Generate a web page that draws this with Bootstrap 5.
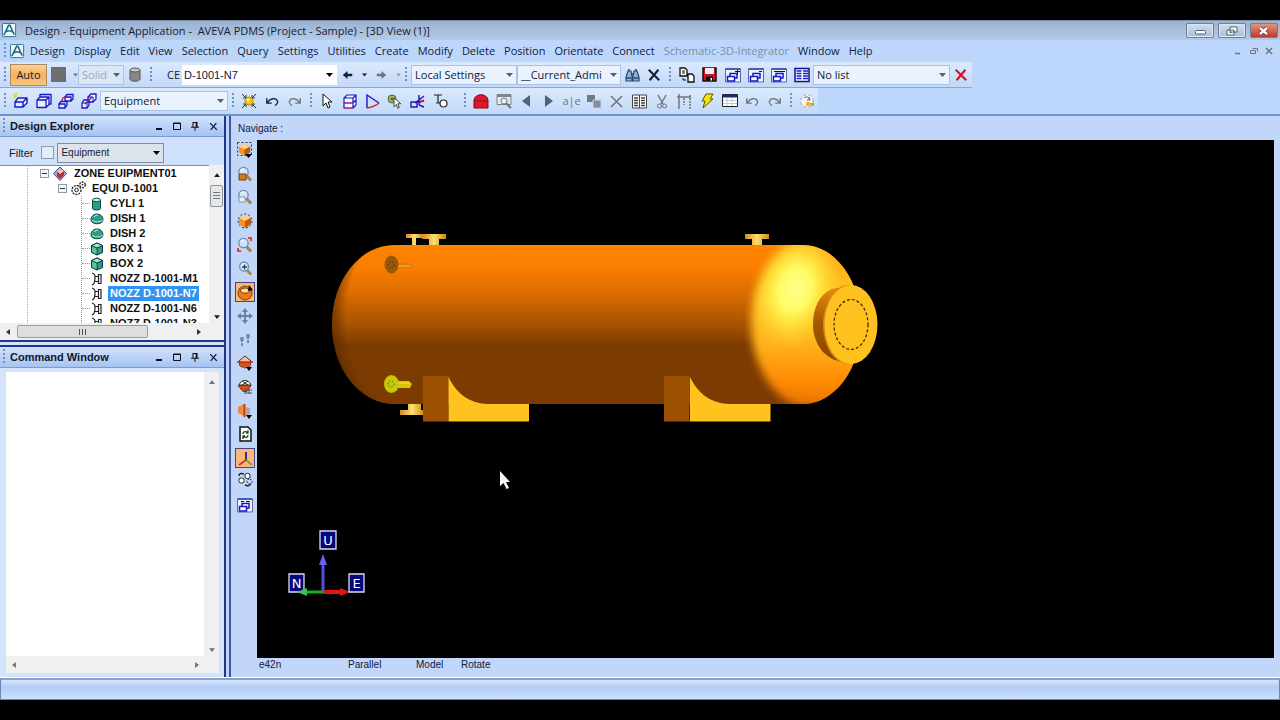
<!DOCTYPE html>
<html lang="en">
<head>
<meta charset="utf-8">
<meta name="viewport" content="width=device-width, initial-scale=1">
<title>Design - Equipment Application - AVEVA PDMS</title>
<link rel="stylesheet" href="https://cdn.jsdelivr.net/npm/bootstrap@5.3.0/dist/css/bootstrap.min.css">
<style>
:root{--line:#7fa6d8;--navy:#25358f}
body{background:#000;color:#12203a;font:11px/16px "Open Sans","Noto Sans",sans-serif;padding:20px 0;overflow:hidden}
button{border:0;background:none;padding:0;color:inherit;font:inherit}
svg{display:block;overflow:visible}
.app-frame{background:#bcd6fc}
.title-bar{height:20px;background:linear-gradient(#9ab2cf,#b4cbe8);border-top:1px solid #7d93ad;padding-left:2px;padding-right:2px}
.title-text{white-space:pre}
.win-btn{width:28px;height:15px;border:1px solid #6d8099;border-radius:2px;background:linear-gradient(#d0deee,#a9bfd8);box-shadow:inset 0 0 0 1px #dbe7f5}
.win-close{background:linear-gradient(#e29480,#c0392b);box-shadow:none}
.menu-row{height:22px;padding-left:4px;padding-right:4px}
.menu-row a{color:#12203a;text-decoration:none;white-space:nowrap}
.menu-row a.dim{color:#7d8fab}
.menu-list{gap:9px;margin-left:5px}
.grip{width:2px;height:16px;flex:none;background:repeating-linear-gradient(#6f8fc4 0 2px,transparent 2px 4px)}
.strip{height:26px;background:linear-gradient(#dbe9fd,#c3d9f8);border-bottom:1px solid #7fa9df;flex:none;padding-left:4px}
.tool{height:22px;display:flex;align-items:center;justify-content:center;flex:1 1 0;min-width:0}
.tool.lone{flex:0 0 22px}
.tool.slim{flex-grow:.6}
.tool-set{flex:none}
.w42{width:44px}.w66{width:68px}.w90{width:90px}.w134{width:136px}.w136{width:138px}.w316{width:316px}
.auto-btn{width:37px;height:22px;flex:none;border:1px solid #a98a5c;background:linear-gradient(#fbd09a,#f7b25c 50%,#fbc67c)}
.ce-label{padding:0 2px 0 15px}
.pick{appearance:none;flex:none;border:1px solid #a9c4e9;border-radius:0;height:20px;color:#12203a;font:inherit;padding:0 14px 0 3px;background:#eaf2fe url("data:image/svg+xml,%3Csvg xmlns='http://www.w3.org/2000/svg' width='8' height='5'%3E%3Cpath d='M0 0h8L4 5z' fill='%234a6484'/%3E%3C/svg%3E") no-repeat right 3px center/7px 4px}
.pick.solid{width:46px;color:#9aa7bb;background-color:#dce7f6}
.pick.ce{width:155px;padding-left:1px;border-color:#fff;background-color:#fff;font-family:"Liberation Sans",sans-serif;background-image:url("data:image/svg+xml,%3Csvg xmlns='http://www.w3.org/2000/svg' width='8' height='5'%3E%3Cpath d='M0 0h8L4 5z'/%3E%3C/svg%3E")}
.pick.local{width:106px}.pick.admi{width:104px}.pick.nolist{width:137px}.pick.equip{width:128px}
.arial{font-family:"Liberation Sans",sans-serif}
.workspace{border-top:2px solid #6f93c6}
.side{width:226px;flex:none;border-right:2px solid var(--navy);background:#d3e3fb}
.pane-head{height:21px;flex:none;padding-left:3px;padding-right:2px;background:linear-gradient(#d2e3fd,#a5c3f2);border-bottom:1px solid #7b9bd4}
.pane-head h2{font:bold 11px/16px "Liberation Sans",sans-serif;margin:0 0 0 5px;color:#101828}
.pane-head .tool{flex:none;width:18px}
.filter-row{height:28px;padding:3px 0 0 9px;background:#d0e1fb}
.filter-row label{margin-right:8px}
.filter-row input{appearance:none;width:13px;height:13px;border:1px solid #8e9cb0;background:#e6edf6;margin:0 3px 0 0}
.filter-row select{width:107px;border-color:#7f8ea4;background-color:#dde3ea;font:10px/16px "Liberation Sans",sans-serif;background-image:url("data:image/svg+xml,%3Csvg xmlns='http://www.w3.org/2000/svg' width='8' height='5'%3E%3Cpath d='M0 0h8L4 5z'/%3E%3C/svg%3E")}
.tree-view{height:158px;background:#fff;border-top:1px solid #7f8ea4;overflow:hidden;padding-left:27px;font:bold 11px/15px "Liberation Sans",sans-serif;color:#101010}
.tree-view ul{list-style:none;margin:0;padding:0}
.tree-root{border-left:1px dotted #aaa;padding-left:12px!important}
.tree-row{display:flex;align-items:center;height:15px;white-space:nowrap}
.tree-row span{padding:0 2px}
.lvl-1{padding-left:18px!important}
.lvl-2{margin-left:23px!important;border-left:1px dotted #999}
.lvl-2 .tree-row::before{content:"";width:8px;border-top:1px dotted #999}
.picked span{background:#3092f2;color:#fff}
.box-mark{width:9px;height:9px;border:1px solid #8f9bb0;background:linear-gradient(#333,#333) center/5px 1px no-repeat #f4f6f9}
.v-scroll{width:15px;background:#f0f0f0;flex:none}
.h-scroll{height:17px;background:#f0f0f0;flex:none}
.v-thumb{width:13px;height:22px;border:1px solid #8e959e;border-radius:2px;background:repeating-linear-gradient(#777 0 1px,transparent 1px 3px) center/7px 9px no-repeat #e6e6e6}
.h-thumb{width:131px;height:13px;border:1px solid #989da5;border-radius:2px;background:repeating-linear-gradient(90deg,#555 0 1px,transparent 1px 3px) center/7px 6px no-repeat #dedede}
.splitter{height:7px;flex:none;background:#d3e3fb;border-top:2px solid var(--navy);border-bottom:2px solid var(--navy)}
.cmd{margin:4px 5px 5px 6px;background:#f0f0f0}
.cmd textarea{border:0;resize:none;outline:0;background:#fff;min-height:0}
.view-pane{margin-left:3px;border-left:2px solid #44539a;background:#c1d6f8;min-width:0;font:10px/16px "Liberation Sans",sans-serif}
.nav-row{height:24px;padding-left:7px;flex:none;padding-top:2px}
.rail{width:26px;flex:none;margin-top:-2px}
.rail-main{height:332px}
.rail .tool{width:22px;margin-left:3px}
.rail > .tool{height:18px}
.rail .on{background:#fbb877;border:1px solid #4a4480;width:20px;flex:none;height:20px;margin:2px 0 2px 4px}
.canvas{background:#000;margin-right:6px;min-width:0;min-height:0;overflow:hidden}
.view-foot{height:20px;flex:none;padding-left:28px;line-height:14px}
.view-foot span:nth-child(1){width:89px}.view-foot span:nth-child(2){width:68px}.view-foot span:nth-child(3){width:45px}
.status-bar{height:22px;background:linear-gradient(#d4e4fb,#b4cdf4 40%,#cbe0fc);border:1px solid #6888b3;border-top:2px solid #8ba2c3;box-shadow:0 -1px #fff}
.dim-ico{opacity:.6}
</style>
</head>
<body class="vh-100 d-flex flex-column">
<svg width="0" height="0" class="position-absolute" aria-hidden="true">
<defs>
<symbol id="logo" viewBox="0 0 16 16"><rect x=".5" y=".5" width="14" height="14" rx="1" fill="#eef7fb" stroke="#2f6e8c"/><path d="M2 13 7 2.500h1.500L13 12.500M4 9.500C7 7.500 10 8 13 11" fill="none" stroke="#1f6a80" stroke-width="1.600"/></symbol>
<symbol id="cube" viewBox="0 0 16 16"><path d="M1 9h8v5H1zM1 9l3-4h9v5l-4 4M9 9l4-4" fill="#e6edff" stroke="#1818c8" stroke-width="1.400" stroke-linejoin="round"/></symbol>
<symbol id="win" viewBox="0 0 16 16"><path d="M.5 1.500h15v13.500H.5z" fill="#eef3ff" stroke="#5a6a9c"/><path d="M1 2h14" stroke="#4860b0" stroke-width="2"/><path d="M2.500 9.500h7v4.500h-7zM5 9V6.500h7V11H9.500" fill="#fff" stroke="#1515d0" stroke-width="1.500"/></symbol>
<symbol id="cursor" viewBox="0 0 16 16"><path d="M4 1v12l3-3 2 5 2-1-2-5h4z" fill="#fff" stroke="#111"/></symbol>
<symbol id="ex" viewBox="0 0 16 16"><path d="M2 2 14 14M13 2 3 14" fill="none" stroke="currentColor" stroke-width="2.400"/></symbol>
<symbol id="tri" viewBox="0 0 8 5"><path d="M0 0h8L4 5z" fill="currentColor"/></symbol>
<symbol id="arr" viewBox="0 0 14 12"><path d="M1 6 7 1v3.500h6v3H7V11z" fill="currentColor"/></symbol>
<symbol id="undo" viewBox="0 0 16 16"><path d="M1 4v6h6M2 9c3-5 10-6 12-2 1 3-1 5-3 6" fill="none" stroke="currentColor" stroke-width="1.700"/></symbol>
<symbol id="pin" viewBox="0 0 10 12"><path d="M2.500 7V1.500h5V7M0 7.500h10M5 7v5M6.500 2v5" fill="none" stroke="#111" stroke-width="1.300"/></symbol>
<symbol id="minb" viewBox="0 0 8 8"><path d="M1 7h6" stroke="#111" stroke-width="2"/></symbol>
<symbol id="maxb" viewBox="0 0 8 8"><path d="M.5 1h7v6.500h-7zM0 1.500h8" fill="none" stroke="#111"/></symbol>
<symbol id="orcube" viewBox="0 0 16 16"><path d="M8 2l6 3v6l-6 4-6-4V5z" fill="#f09226"/><path d="M8 2l6 3-6 3-6-3z" fill="#ffd089"/><path d="M8 8l6-3v6l-6 4z" fill="#b85d0c"/></symbol>
<symbol id="lens" viewBox="0 0 16 16"><path d="m9 9 5 5.500" stroke="#a88646" stroke-width="3"/><circle cx="6.500" cy="6" r="4.700" fill="#cfe6fa" stroke="#6a8cae" stroke-width="1.300"/><path d="M4 5a3 3 0 0 1 3-2" stroke="#fff" fill="none"/></symbol>
<symbol id="dish" viewBox="0 0 14 14"><path d="M1 8c0-8 12-8 12 0 0 5-12 5-12 0z" fill="#2f9c87" stroke="#0d4a42"/><path d="M2 8c2 2.500 8 2.500 11 0" stroke="#b4efdf" fill="none"/><path d="M4 5c1-1.500 3-2 4-2" stroke="#c9f6ea" fill="none"/></symbol>
<symbol id="tbox" viewBox="0 0 14 14"><path d="m7 1 5.500 2.500v7L7 13l-5.500-2.500v-7z" fill="#2f9c87" stroke="#0d3a36"/><path d="m1.500 3.500 5.500 2.500 5.500-2.500L7 1z" fill="#a9e6d8" stroke="#0d3a36"/><path d="M7 6v7" stroke="#0d3a36"/><path d="m2 4.500 4.500 2v5.500L2 10z" fill="#5cc0ab"/></symbol>
<symbol id="nozz" viewBox="0 0 14 14"><path d="M2 1c3 1 3 2 3 5s0 6-3 7M5 4.500h4M5 9.500h4M8.500 2.500h2.500v9H8.500z" fill="none" stroke="#222" stroke-width="1.200"/></symbol>
</defs>
</svg>

<div class="app-frame d-flex flex-column flex-fill">
<header class="title-bar d-flex align-items-center flex-shrink-0">
<svg width="15" height="15"><use href="#logo"/></svg>
<span class="title-text ms-2 me-auto">Design - Equipment Application -  AVEVA PDMS (Project - Sample) - [3D View (1)]</span>
<div class="d-flex gap-1">
<button class="win-btn d-flex align-items-center justify-content-center" aria-label="Minimize"><svg width="11" height="9"><rect x=".5" y="4.500" width="10" height="3.500" rx="1" fill="#fff" stroke="#53616f"/></svg></button>
<button class="win-btn d-flex align-items-center justify-content-center" aria-label="Restore"><svg width="12" height="10"><path d="M4 1h7v5H4zM1 4h7v5H1z" fill="#fff" stroke="#53616f"/><path d="M3.500 6h2v1h-2z" fill="#53616f"/></svg></button>
<button class="win-btn win-close d-flex align-items-center justify-content-center" aria-label="Close"><svg width="8" height="6"><path d="m0 0 7 6M7 0 0 6" stroke="#563030" stroke-width="4"/><path d="m0 0 7 6M7 0 0 6" stroke="#fff" stroke-width="2.400"/></svg></button>
</div>
</header>

<nav class="menu-row d-flex align-items-center flex-shrink-0">
<i class="grip"></i><svg class="ms-1" width="15" height="15"><use href="#logo"/></svg>
<div class="menu-list d-flex me-auto">
<a href="#">Design</a><a href="#">Display</a><a href="#">Edit</a><a href="#">View</a><a href="#">Selection</a><a href="#">Query</a><a href="#">Settings</a><a href="#">Utilities</a><a href="#">Create</a><a href="#">Modify</a><a href="#">Delete</a><a href="#">Position</a><a href="#">Orientate</a><a href="#">Connect</a><a href="#" class="dim">Schematic-3D-Integrator</a><a href="#">Window</a><a href="#">Help</a>
</div>
<div class="d-flex gap-2 text-secondary me-1">
<button aria-label="Minimize view"><svg width="8" height="8"><path d="M1 6.500h5" stroke="currentColor" stroke-width="1.500"/></svg></button>
<button aria-label="Restore view"><svg width="8" height="8"><path d="M2.500 1.500h5v3M.5 3.500h5v3h-5z" fill="none" stroke="currentColor"/></svg></button>
<button aria-label="Close view"><svg width="6" height="8"><path d="m0 1 6 6M6 1 0 7" stroke="currentColor" stroke-width="1.500"/></svg></button>
</div>
</nav>

<div class="d-flex flex-shrink-0">
<div class="strip d-flex align-items-center" role="toolbar" aria-label="Representation">
<i class="grip me-1"></i>
<button class="auto-btn">Auto</button>
<button class="tool lone" aria-label="Colour"><svg width="15" height="15"><path d="M0 0h15v15H0z" fill="#6f6f6f"/></svg></button>
<svg class="ms-1 flex-shrink-0 text-secondary" width="5" height="4"><use href="#tri"/></svg>
<select class="pick solid" aria-label="Fill style"><option>Solid</option></select>
<button class="tool lone" aria-label="Cylinder"><svg width="12" height="15"><path d="M1 3v9c0 3 10 3 10 0V3" fill="#888" stroke="#555"/><ellipse cx="6" cy="3" rx="5" ry="2" fill="#c8c8c8" stroke="#555"/></svg></button>
<i class="grip ms-1"></i>
<label class="ce-label text-nowrap" for="ce">CE</label>
<select id="ce" class="pick ce"><option>D-1001-N7</option></select>
<div class="tool-set d-flex w66">
<button class="tool" aria-label="Back"><svg width="11" height="10"><use href="#arr"/></svg></button>
<button class="tool slim" aria-label="Back list"><svg width="5" height="4"><use href="#tri"/></svg></button>
<button class="tool text-secondary" aria-label="Forward"><svg width="11" height="10" style="transform:rotate(180deg)"><use href="#arr"/></svg></button>
<button class="tool slim text-secondary" aria-label="Forward list"><svg class="dim-ico" width="5" height="4"><use href="#tri"/></svg></button>
</div>
<i class="grip me-1"></i>
<select class="pick local" aria-label="Settings scope"><option>Local Settings</option></select>
<select class="pick admi" aria-label="List"><option>__Current_Admi</option></select>
<div class="tool-set d-flex w42 me-1">
<button class="tool" aria-label="Find"><svg width="15" height="14"><path d="M1 9l2-6h3l1 6v4H1zM14 9l-2-6H9L8 9v4h6z" fill="#8fb2d8" stroke="#27486f" stroke-width="1.200"/><path d="M6.500 6h2M1 10h5M9 10h5M4 3V1M11 3V1" stroke="#27486f" stroke-width="1.500"/></svg></button>
<button class="tool" aria-label="Clear"><svg width="14" height="14"><use href="#ex"/></svg></button>
</div>
<i class="grip"></i>
<div class="tool-set d-flex w136 ms-1">
<button class="tool" aria-label="Copy"><svg width="16" height="16"><path d="M1 1h5l2 2v6H1zM9 7h4l2 2v6H9z" fill="#fff" stroke="#111" stroke-width="1.300"/><path d="M3 4h3M3 6h3M4 11v2h3" stroke="#111" fill="none"/></svg></button>
<button class="tool" aria-label="Save"><svg width="15" height="15"><path d="M1 1h13v13H1z" fill="#d31024" stroke="#2b060a" stroke-width="1.500"/><path d="M3 1h9v6H3z" fill="#e9edf3"/><path d="M4 9.500h7V14H4z" fill="#111"/><path d="M8.500 11h1.500v2.500H8.500z" fill="#fff"/></svg></button>
<button class="tool" aria-label="Add view"><svg width="16" height="16"><use href="#win"/><path d="M10 4.500h5M12.500 2.500v5" stroke="#112" /></svg></button>
<button class="tool" aria-label="Open view"><svg width="16" height="16"><use href="#win"/><path d="M11 4.500h3" stroke="#112"/></svg></button>
<button class="tool" aria-label="Remove view"><svg width="16" height="16"><use href="#win"/><path d="M3 4.500h11" stroke="#112"/></svg></button>
<button class="tool" aria-label="Columns"><svg width="16" height="16"><path d="M1 1.500h14v13H1z" fill="#fff" stroke="#10108a" stroke-width="1.500"/><path d="M2.500 4h5M2.500 6.500h5M2.500 9h5M2.500 11.500h5M9 4h5M9 6.500h5M9 9h5M9 11.500h5" stroke="#1818e0" stroke-width="1.600"/></svg></button>
</div>
<select class="pick nolist" aria-label="Named list"><option>No list</option></select>
<button class="tool lone" aria-label="Delete list"><svg width="14" height="14" style="color:#d8121c"><use href="#ex"/></svg></button>
</div>
</div>

<div class="d-flex flex-shrink-0">
<div class="strip d-flex align-items-center border-bottom-0" role="toolbar" aria-label="Equipment tools">
<i class="grip me-1"></i>
<div class="tool-set d-flex w90">
<button class="tool" aria-label="Create equipment"><svg width="16" height="16"><use href="#cube" x="1" width="16" height="16"/><path d="M0 1l4 4M4 0 1 5" stroke="#e8d800" stroke-width="1.500"/></svg></button>
<button class="tool" aria-label="Create structure"><svg width="16" height="16"><path d="M4 4V1.500h11V11h-2.500M1 7h9v7.500H1zM1 7l3-3h9v7.500l-3 3M10 7l3-3" fill="#e6edff" stroke="#1818c8" stroke-width="1.300" stroke-linejoin="round"/></svg></button>
<button class="tool" aria-label="Copy element"><svg width="16" height="16"><path d="M7 4h6v4H7zM7 4l2-2.500h6V6l-2 2M1 11h6v4H1zM1 11l2-2.500h6V12l-2 3" fill="#e6edff" stroke="#1818c8" stroke-width="1.300"/><path d="M4 8c0-3 1-4 5-4" stroke="#a01a5a" fill="none" stroke-width="1.300"/></svg></button>
<button class="tool" aria-label="Connect element"><svg width="16" height="16"><path d="M7 4 10 1h5v5l-3 3H7zM1 10l2-3h5v5l-2 3H1z" fill="#e6edff" stroke="#1818c8" stroke-width="1.300"/><path d="M1 10h5v5M6 10l2-3M7 4h5v5" stroke="#1818c8" fill="none"/><path d="m4 11 7-7" stroke="#a01a5a" stroke-width="1.300"/></svg></button>
</div>
<select class="pick equip" aria-label="Element type"><option>Equipment</option></select>
<i class="grip mx-1"></i>
<div class="tool-set d-flex w66">
<button class="tool" aria-label="Explode"><svg width="16" height="16"><path d="m1 1 4 4m10-4-4 4M1 15l4-4m10 4-4-4M5 2v3H2M11 2v3h3M5 14v-3H2M11 14v-3h3" stroke="#333" fill="none"/><circle cx="8" cy="8" r="4" fill="#f4c713" stroke="#c28e00"/><circle cx="7" cy="7" r="1.300" fill="#fff7b0"/></svg></button>
<button class="tool" aria-label="Undo"><svg width="13" height="13"><use href="#undo"/></svg></button>
<button class="tool text-secondary" aria-label="Redo"><svg width="13" height="13" style="transform:scaleX(-1)"><use href="#undo"/></svg></button>
</div>
<i class="grip ms-1"></i>
<div class="tool-set d-flex w134 ms-1 me-2">
<button class="tool" aria-label="Select"><svg width="16" height="16"><use href="#cursor"/></svg></button>
<button class="tool" aria-label="Box"><svg width="14" height="15"><path d="M1 4h9v10H1zM1 4l3-3h9v10l-3 3M10 4l3-3M1 9h9l3-3" fill="#f4f7ff" stroke="#1818c8" stroke-width="1.200"/><path d="M1 14h9M1 9h9" stroke="#d02060"/></svg></button>
<button class="tool" aria-label="Cone"><svg width="15" height="15"><path d="M2 14V1l12 8" fill="none" stroke="#1818c8" stroke-width="1.400"/><path d="M2 14c5-1 9-2 12-5" fill="none" stroke="#d0202c" stroke-width="1.300"/></svg></button>
<button class="tool" aria-label="Pick element"><svg width="16" height="16"><circle cx="5" cy="6" r="4" fill="#8ac46c" stroke="#2f7c30"/><circle cx="5" cy="6" r="1.500" fill="#e02c20"/><use href="#cursor" x="4" y="4" width="12" height="12"/></svg></button>
<button class="tool" aria-label="Move"><svg width="16" height="16"><path d="M1 9h6v5H1zM7 9l7-1M9 12V2M5 10l9-7M9 12l5 2" fill="none" stroke="#1818b8" stroke-width="1.400"/><path d="M9 10l5-3" stroke="#d01c30" stroke-width="1.500"/></svg></button>
<button class="tool" aria-label="Modify"><svg width="16" height="16"><path d="M1 2h8M5 2v8M3 10h4" stroke="#222" fill="none" stroke-width="1.200"/><circle cx="10.500" cy="10.500" r="3.500" fill="#fff" stroke="#222" stroke-width="1.200"/></svg></button>
</div>
</div>
<div class="strip d-flex align-items-center border-bottom-0" role="toolbar" aria-label="Model editor">
<i class="grip"></i>
<div class="tool-set d-flex w316 ms-1">
<button class="tool" aria-label="Model editor"><svg width="16" height="16"><path d="M1 15V7c1-7 13-7 14 0v8z" fill="#e0182a" stroke="#7c0a14"/><path d="M1 8h14" stroke="#8c0f1c"/></svg></button>
<button class="tool dim-ico" aria-label="Find in view"><svg width="16" height="16"><path d="M1 1.500h14v10H1z" fill="#eee" stroke="#444"/><path d="M1 3h14" stroke="#444" stroke-width="2"/><circle cx="8" cy="8" r="3" fill="#fff" stroke="#333"/><path d="m10 10 5 5" stroke="#333" stroke-width="2"/></svg></button>
<button class="tool" aria-label="Previous"><svg width="10" height="14"><path d="M9 1v12L1 7z" fill="#566172"/></svg></button>
<button class="tool" aria-label="Next"><svg width="10" height="14"><path d="M1 1v12l8-6z" fill="#566172"/></svg></button>
<button class="tool text-secondary" aria-label="Rename">a|e</button>
<button class="tool dim-ico" aria-label="Group"><svg width="14" height="13"><path d="M0 0h8v7H0z" fill="#333"/><path d="M6 5h8v8H6z" fill="#555" stroke="#ccd"/></svg></button>
<button class="tool text-secondary" aria-label="Delete"><svg width="13" height="13"><path d="m1 1 11 11M12 1 1 12" stroke="currentColor" stroke-width="1.500"/></svg></button>
<button class="tool" aria-label="Properties"><svg width="15" height="15"><path d="M.5 1h14v13H.5zM7.500 1v13" fill="#fff" stroke="#444"/><path d="M2 4h4M2 6.500h4M2 9h4M2 11.500h4M9 4h4M9 6.500h4M9 9h4M9 11.500h4" stroke="#444" stroke-width="1.300"/></svg></button>
<button class="tool text-secondary" aria-label="Cut"><svg width="12" height="15"><path d="m2 1 5 9M10 1 5 10" stroke="currentColor" stroke-width="1.400"/><circle cx="3.500" cy="12" r="2" fill="none" stroke="currentColor"/><circle cx="8.500" cy="12" r="2" fill="none" stroke="currentColor"/></svg></button>
<button class="tool text-secondary" aria-label="Measure"><svg width="15" height="15"><path d="M2 0v15M0 3h14" stroke="currentColor" stroke-width="1.500"/><path d="M13 1v14M7 4v7" stroke="currentColor" stroke-width="1.500" stroke-dasharray="2 1"/></svg></button>
<button class="tool" aria-label="Quick run"><svg width="13" height="16"><path d="M5 1h7L9 6h3L2 15l2-7H1z" fill="#f7e600" stroke="#5a5200"/></svg></button>
<button class="tool" aria-label="Form"><svg width="16" height="14"><path d="M.5.5h15v12H.5z" fill="#fff" stroke="#222"/><path d="M1 2h14" stroke="#1b2f6b" stroke-width="3"/><path d="M1 6.500h14M1 9.500h14M5 4v8M10 4v8" stroke="#c3c9d6"/></svg></button>
<button class="tool text-secondary" aria-label="Undo edit"><svg width="13" height="13"><use href="#undo"/></svg></button>
<button class="tool text-secondary" aria-label="Redo edit"><svg width="13" height="13" style="transform:scaleX(-1)"><use href="#undo"/></svg></button>
</div>
<i class="grip mx-1"></i>
<button class="tool lone" aria-label="Render options"><svg width="15" height="15"><circle cx="7" cy="7" r="6.200" fill="#f6f7fa" stroke="#9aa" stroke-dasharray="3 2"/><path d="M4 4c2-2 5-1 5 1M9 3l1 3H7" stroke="#556" fill="none"/><circle cx="8" cy="10" r="2.200" fill="#f2b514"/><path d="M10 9h4v3h-3z" fill="#e5a000"/></svg></button>
</div>
</div>

<main class="workspace d-flex flex-fill">
<aside class="side d-flex flex-column">
<section class="d-flex flex-column flex-shrink-0">
<div class="pane-head d-flex align-items-center"><i class="grip"></i><h2 class="me-auto">Design Explorer</h2>
<button class="tool" aria-label="Minimize"><svg width="8" height="8"><use href="#minb"/></svg></button><button class="tool" aria-label="Maximize"><svg width="8" height="8"><use href="#maxb"/></svg></button><button class="tool" aria-label="Pin"><svg width="8" height="10"><use href="#pin"/></svg></button><button class="tool" aria-label="Close"><svg width="9" height="9"><use href="#ex"/></svg></button></div>
<div class="filter-row d-flex align-items-center"><label class="arial" for="filter">Filter</label><input id="filter" type="checkbox"><select class="pick" aria-label="Filter type"><option>Equipment</option></select></div>
<div class="d-flex">
<div class="tree-view flex-fill">
<ul class="tree-root"><li>
<div class="tree-row"><i class="box-mark"></i><svg class="mx-1" width="15" height="14"><path d="m7 0 6.500 6.500L7 13.500.5 6.500z" fill="#9bb4d6" stroke="#3b5376"/><path d="M4 4l3 3v5L4 9zM7 7l4-3v4L7 12z" fill="#c8202c"/><path d="m4 4 3-2 4 2-4 3z" fill="#f0c4c4"/></svg><span>ZONE EUIPMENT01</span></div>
<ul class="lvl-1"><li>
<div class="tree-row"><i class="box-mark"></i><svg class="mx-1" width="15" height="15"><circle cx="5.500" cy="9" r="4.500" fill="#fff" stroke="#222" stroke-width="1.300" stroke-dasharray="2 1"/><circle cx="5.500" cy="9" r="1.800" fill="none" stroke="#222"/><circle cx="11.500" cy="3.800" r="2.800" fill="#fff" stroke="#222" stroke-width="1.300" stroke-dasharray="2 1"/><circle cx="11.500" cy="3.800" r=".8"/></svg><span>EQUI D-1001</span></div>
<ul class="lvl-2">
<li class="tree-row"><svg class="me-1" width="14" height="14"><path d="M2.500 3v8.500c0 2 8 2 8 0V3" fill="#2f9c87" stroke="#0d4a42"/><ellipse cx="6.500" cy="3" rx="4" ry="1.800" fill="#bff0e4" stroke="#0d4a42"/></svg><span>CYLI 1</span></li>
<li class="tree-row"><svg class="me-1" width="14" height="14"><use href="#dish"/></svg><span>DISH 1</span></li>
<li class="tree-row"><svg class="me-1" width="14" height="14"><use href="#dish"/></svg><span>DISH 2</span></li>
<li class="tree-row"><svg class="me-1" width="14" height="14"><use href="#tbox"/></svg><span>BOX 1</span></li>
<li class="tree-row"><svg class="me-1" width="14" height="14"><use href="#tbox"/></svg><span>BOX 2</span></li>
<li class="tree-row"><svg class="me-1" width="14" height="14"><use href="#nozz"/></svg><span>NOZZ D-1001-M1</span></li>
<li class="tree-row picked"><svg class="me-1" width="14" height="14"><use href="#nozz"/></svg><span>NOZZ D-1001-N7</span></li>
<li class="tree-row"><svg class="me-1" width="14" height="14"><use href="#nozz"/></svg><span>NOZZ D-1001-N6</span></li>
<li class="tree-row"><svg class="me-1" width="14" height="14"><use href="#nozz"/></svg><span>NOZZ D-1001-N3</span></li>
</ul></li></ul></li></ul>
</div>
<div class="v-scroll d-flex flex-column align-items-center pt-2 pb-1"><svg width="6" height="4" style="transform:scaleY(-1)"><use href="#tri"/></svg><i class="v-thumb mt-2 mb-auto"></i><svg width="6" height="4"><use href="#tri"/></svg></div>
</div>
<div class="h-scroll d-flex align-items-center ps-1"><svg width="9" height="6"><path d="M6 0v6L2 3z" fill="#333"/></svg><i class="h-thumb ms-1 me-5"></i><svg width="6" height="6"><path d="M1 0v6l4-3z" fill="#333"/></svg></div>
</section>
<div class="splitter"></div>
<section class="d-flex flex-column flex-fill">
<div class="pane-head d-flex align-items-center"><i class="grip"></i><h2 class="me-auto">Command Window</h2>
<button class="tool" aria-label="Minimize"><svg width="8" height="8"><use href="#minb"/></svg></button><button class="tool" aria-label="Maximize"><svg width="8" height="8"><use href="#maxb"/></svg></button><button class="tool" aria-label="Pin"><svg width="8" height="10"><use href="#pin"/></svg></button><button class="tool" aria-label="Close"><svg width="9" height="9"><use href="#ex"/></svg></button></div>
<div class="cmd d-flex flex-column flex-fill">
<div class="d-flex flex-fill"><textarea class="flex-fill w-100" aria-label="Command input"></textarea><div class="v-scroll d-flex flex-column justify-content-between align-items-center pt-2 pb-1 text-secondary"><svg width="6" height="4" style="transform:scaleY(-1)"><use href="#tri"/></svg><svg width="6" height="4"><use href="#tri"/></svg></div></div>
<div class="h-scroll d-flex align-items-center justify-content-between ps-1 pe-3"><svg width="7" height="6"><path d="M6 0v6L2 3z" fill="#777"/></svg><svg width="9" height="6"><path d="M1 0v6l4-3z" fill="#777"/></svg></div>
</div>
</section>
</aside>

<section class="view-pane d-flex flex-column flex-fill">
<div class="nav-row d-flex align-items-center">Navigate :</div>
<div class="d-flex flex-fill">
<div class="rail">
<div class="rail-main d-flex flex-column">
<button class="tool" aria-label="Limits"><svg width="16" height="16"><path d="M.5.5h14v13H.5z" fill="none" stroke="#333" stroke-dasharray="2 2"/><use href="#orcube" width="15" height="15"/><path d="M8 12h7l-3.500 4z"/></svg></button>
<button class="tool" aria-label="Zoom to selection"><svg width="16" height="16"><use href="#lens" width="16" height="16"/><path d="M2 8h7v6H2z" fill="#d47a1c" stroke="#7c430a"/></svg></button>
<button class="tool" aria-label="Zoom window"><svg width="16" height="16"><use href="#lens"/><path d="M2 8h6v5H2z" fill="#edf3fb" stroke="#8295ae"/></svg></button>
<button class="tool" aria-label="Fit"><svg width="16" height="16"><circle cx="8" cy="8" r="7" fill="none" stroke="#333" stroke-dasharray="2 2"/><use href="#orcube"/></svg></button>
<button class="tool" aria-label="Zoom area"><svg width="16" height="16"><use href="#lens"/><path d="M11 1h3v3M1 11v3h3" fill="none" stroke="#d24a3a" stroke-width="2"/></svg></button>
<button class="tool" aria-label="Zoom in"><svg width="15" height="15"><use href="#lens"/><path d="M4 6h5M6.500 3.500v5" stroke="#345" stroke-width="1.300"/></svg></button>
<button class="tool on" aria-label="Rotate"><svg width="17" height="17"><circle cx="8" cy="9" r="7" fill="#e87d1a" stroke="#7d3d0a"/><path d="M3 7c2-4 8-4 10 0-3 3-7 3-10 0z" fill="#ffd9a1" stroke="#703808"/><path d="m12 1 4 5-5 1z"/></svg></button>
<button class="tool" aria-label="Pan"><svg width="16" height="16"><path d="M8 2v12M2 8h12" stroke="#66809e" stroke-width="1.800"/><path d="M8 0l3 4H5zM8 16l3-4H5zM0 8l4-3v6zM16 8l-4-3v6z" fill="#66809e"/></svg></button>
<button class="tool" aria-label="Walk"><svg width="12" height="14"><path d="M1 6c0-3 4-3 4 0l-1 3H2zM2 10h2v3H2zM7 3c0-3 4-3 4 0l-1 3H8zM8 7h2v3H8z" fill="#6f8cab"/></svg></button>
<button class="tool" aria-label="Clip"><svg width="16" height="16"><path d="m8 1 6 5-1 5-5 2-5-2-1-5z" fill="#f0c498" stroke="#593018"/><path d="M2 7h12l-2 4-4 2-4-2z" fill="#d2551a"/><path d="M0 7h16" stroke="#c8242c" stroke-width="1.500"/><path d="M9 12h6l-3 4z"/></svg></button>
<button class="tool" aria-label="Clip to element"><svg width="16" height="16"><path d="M2 6c2-6 10-6 12 0zM5 2l6 4M11 2 5 6" fill="#fff" stroke="#333"/><path d="M1 6.500h13l-4 6H6z" fill="#d2551a" stroke="#743010"/><path d="M8 11h7M8 14h7M8 10v5M12 11v4" stroke="#556" /></svg></button>
<button class="tool" aria-label="Section"><svg width="16" height="16"><path d="m1 4 6-3v12l-6-3z" fill="#f28a3c"/><path d="m9 4 4 1v6l-4 1z" fill="#b9a69a"/><path d="M7.500 1v13" stroke="#c53b16" stroke-width="2"/><path d="M9 12h6l-3 4z"/></svg></button>
<button class="tool" aria-label="Refresh"><svg width="13" height="16"><path d="M1 1h8l3 3v11H1z" fill="#fff" stroke="#111" stroke-width="1.500"/><path d="M4 8c0-3 4-3 5-1M9 9c0 3-4 3-5 1M9 4v3H7M4 13v-3h2" fill="none" stroke="#184a28" stroke-width="1.300"/></svg></button>
<button class="tool on" aria-label="Axes"><svg width="17" height="17"><path d="M9 10V2" stroke="#3a2ba0" stroke-width="2"/><path d="m9 10-7 5" stroke="#d22" stroke-width="1.600"/><path d="m9 10 6 5" stroke="#3a3" stroke-width="1.600"/></svg></button>
</div>
<button class="tool" aria-label="Swap views"><svg width="15" height="15"><path d="M1 4c0-3 3-3 5-2M13 12l-3 2-3-1" fill="none" stroke="#222" stroke-width="1.500"/><circle cx="9.500" cy="4" r="2.700" fill="#fff" stroke="#222"/><circle cx="3.500" cy="8.500" r="2.700" fill="#fff" stroke="#222"/><circle cx="11.500" cy="9.500" r="2.500" fill="none" stroke="#234" stroke-dasharray="2 1"/></svg></button>
<button class="tool mt-2" aria-label="View window"><svg width="16" height="16"><use href="#win"/><path d="M4 4.500h3M9 4.500h4" stroke="#112"/></svg></button>
</div>
<div class="canvas flex-fill">
<svg width="1017" height="518" viewBox="257 140 1017 518" role="img" aria-label="Horizontal vessel D-1001">
<defs>
<linearGradient id="shell" x1="0" y1="245" x2="0" y2="404" gradientUnits="userSpaceOnUse"><stop offset="0" stop-color="#ff8400"/><stop offset=".15" stop-color="#f97d00"/><stop offset=".3" stop-color="#dc6d00"/><stop offset=".5" stop-color="#a75200"/><stop offset=".63" stop-color="#7c3c00"/><stop offset="1" stop-color="#7c3b00"/></linearGradient>
<linearGradient id="head" x1="0" y1="245" x2="0" y2="404" gradientUnits="userSpaceOnUse"><stop offset="0" stop-color="#ffa814"/><stop offset=".3" stop-color="#ffc322"/><stop offset=".6" stop-color="#ffb51c"/><stop offset=".85" stop-color="#ff8c05"/><stop offset="1" stop-color="#e87600"/></linearGradient>
<radialGradient id="glow" cx="0" cy="0" r="1" gradientUnits="userSpaceOnUse" gradientTransform="translate(795 289) rotate(15) scale(45 62)"><stop offset="0" stop-color="#ffff8c"/><stop offset=".35" stop-color="#fffb66"/><stop offset=".6" stop-color="#ffee46" stop-opacity=".7"/><stop offset="1" stop-color="#ffd030" stop-opacity="0"/></radialGradient>
<linearGradient id="flange"><stop offset="0" stop-color="#d38a20"/><stop offset=".5" stop-color="#ffe070"/><stop offset="1" stop-color="#c98a10"/></linearGradient>
<linearGradient id="neck" x1="0" y1="0" x2="0" y2="1"><stop offset="0" stop-color="#e58a10"/><stop offset=".5" stop-color="#a35600"/><stop offset="1" stop-color="#8a4300"/></linearGradient>
<radialGradient id="rim" cx="0" cy="0" r="1" gradientUnits="userSpaceOnUse" gradientTransform="translate(410 318) scale(78 112)"><stop offset=".82" stop-color="#5a2a00" stop-opacity="0"/><stop offset="1" stop-color="#5a2a00" stop-opacity=".7"/></radialGradient>
<filter id="soft" x="-20%" y="-20%" width="140%" height="140%"><feGaussianBlur stdDeviation="4"/></filter>
<clipPath id="outline"><path d="M394 245H803A58 79.500 0 0 1 803 404H394A62 79.500 0 0 1 394 245z"/></clipPath>
<mask id="headmask" maskUnits="userSpaceOnUse" x="730" y="230" width="160" height="190"><ellipse cx="811" cy="322" rx="60" ry="86" fill="#fff" filter="url(#soft)"/><path d="M815 240h60v170h-60z" fill="#fff"/></mask>
</defs>
<g fill="url(#flange)"><path d="M406 234h17v4h-17zM412 238h4v8h-4z"/><path d="M422 234h24v5h-24zM429 239h10v7h-10z"/><path d="M745 234h24v5h-24zM752 239h10v7h-10z"/><path d="M408 402h13v9h-13zM400 410h24v5h-24z"/></g>
<g clip-path="url(#outline)"><path d="M330 240h550v170H330z" fill="url(#shell)"/><path d="M330 243h64v163h-64z" fill="url(#rim)"/><g mask="url(#headmask)"><path d="M735 240h140v170H735z" fill="url(#head)"/><path d="M735 240h140v170H735z" fill="url(#glow)"/></g></g>
<path d="M842 288c-16-2-29 14-29 36 0 20 12 36 30 38z" fill="url(#neck)"/>
<ellipse cx="848" cy="324.500" rx="25" ry="39.500" fill="#d98a0c"/><ellipse cx="851" cy="324.500" rx="26.500" ry="39.500" fill="#ffc11d"/>
<ellipse cx="851" cy="324.500" rx="17" ry="25" fill="none" stroke="#3a2600" stroke-width="1.200" stroke-dasharray="3 2"/>
<path d="M423 376h25.500v45.500H423zM664 376h25.500v45.500H664z" fill="#9d5000"/>
<path id="saddle" d="M448.500 377C456 392 467 403 488 404H529v17.500h-80.500z" fill="#ffc21e"/><use href="#saddle" x="241.500"/>
<path d="M398 263h12l2 2-2 3h-12z" fill="#e07b10"/><path d="M398 266h12" stroke="#ffb84c"/><ellipse cx="391.500" cy="264.500" rx="7" ry="9" fill="#9b5708"/><circle cx="391" cy="265" r="3" fill="none" stroke="#2c1800" stroke-dasharray="1 2"/>
<path d="M397 381h12l3 3-2 4h-13z" fill="#d6c800"/><path d="M397 383h13" stroke="#f6f200"/><ellipse cx="391.500" cy="384" rx="7.500" ry="9" fill="#c7c80c"/><circle cx="391" cy="384" r="3" fill="none" stroke="#3c3c00" stroke-dasharray="1 2"/>
<path d="M323 592V563" stroke="#5550e0" stroke-width="3"/><path d="m323 554 4 11h-8z" fill="#6a62f0"/>
<path d="M323 592h-20" stroke="#12b32a" stroke-width="3"/>
<path d="M323 592h19" stroke="#e01616" stroke-width="4"/><path d="m350 592-10-4v8z" fill="#e01616"/>
<g fill="#07077c" stroke="#d8dcf8" stroke-width="1.300"><path d="M320 531h16v18h-16zM289 574h15v18h-15zM349 574h15v18h-15z"/></g>
<path d="m297 592 10-4v8z" fill="#3bc550"/>
<g fill="#fff" font-family="DejaVu Sans" font-size="13" text-anchor="middle"><text x="328" y="545">U</text><text x="296.500" y="588">N</text><text x="356.500" y="588">E</text></g>
<path d="M500 471v15l3.500-3 3 6 2.500-1-3-6h4z" fill="#f5f5f5"/>
</svg>
</div>
</div>
<div class="view-foot d-flex"><span>e42n</span><span>Parallel</span><span>Model</span><span>Rotate</span></div>
</section>
</main>
<footer class="status-bar flex-shrink-0"></footer>
</div>
<script src="https://cdn.jsdelivr.net/npm/bootstrap@5.3.0/dist/js/bootstrap.bundle.min.js"></script>
</body>
</html>
